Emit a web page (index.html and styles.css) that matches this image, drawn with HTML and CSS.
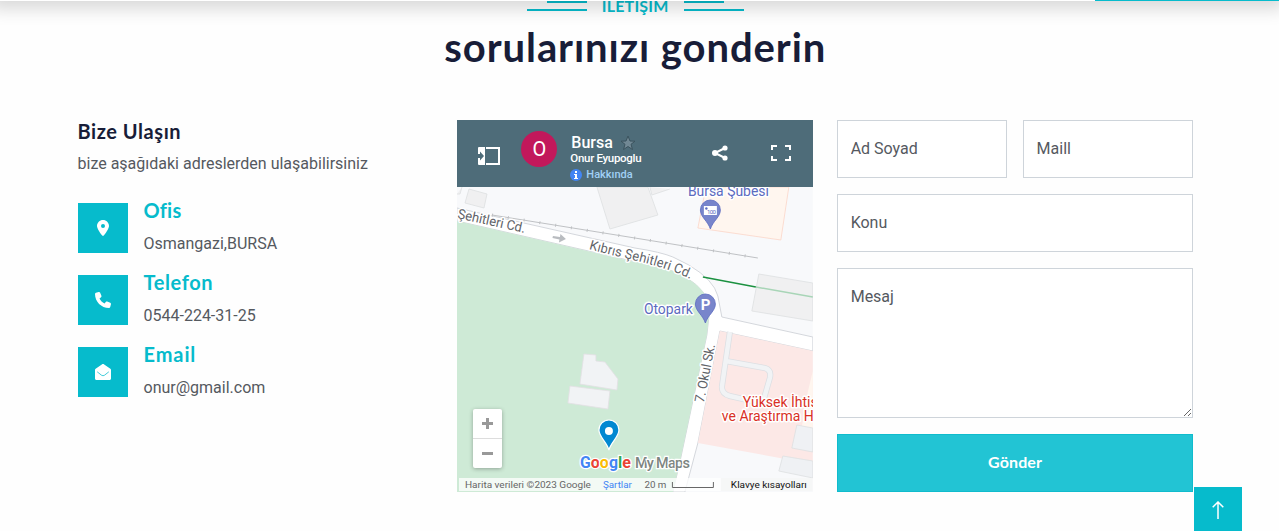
FILE: index.html
```html
<!DOCTYPE html>
<html lang="tr">
<head>
<meta charset="utf-8">
<title>İletişim</title>
<link rel="stylesheet" href="styles.css">
</head>
<body>
<header class="navbar"><span class="navbar-action"></span></header>
<main class="contact">
  <div class="heading">
    <div class="eyebrow"><span class="rules left"></span><span class="eyebrow-text">İLETİŞİM</span><span class="rules right"></span></div>
    <h1 class="title">sorularınızı gonderin</h1>
  </div>
  <div class="columns">
    <section class="info">
      <h2 class="info-title">Bize Ulaşın</h2>
      <p class="info-text">bize aşağıdaki adreslerden ulaşabilirsiniz</p>
      <div class="item">
        <span class="item-icon"><svg width="12" height="16" viewBox="0 0 384 512"><path d="M215.700 499.200C267 435 384 279.400 384 192 384 86 298 0 192 0S0 86 0 192c0 87.400 117 243 168.300 307.200 12.300 15.300 35.100 15.300 47.400 0zM192 128a64 64 0 1 1 0 128 64 64 0 1 1 0-128z"/></svg></span>
        <div><h3 class="item-title ofis">Ofis</h3><p class="item-text">Osmangazi,BURSA</p></div>
      </div>
      <div class="item">
        <span class="item-icon"><svg width="16" height="16" viewBox="0 0 512 512"><path d="M164.900 24.600c-7.700-18.600-28-28.500-47.400-23.200l-88 24C12.100 30.200 0 46 0 64c0 247.400 200.600 448 448 448 18 0 33.800-12.100 38.600-29.500l24-88c5.300-19.400-4.600-39.700-23.200-47.400l-96-40c-16.300-6.800-35.200-2.100-46.300 11.600L304.700 368C234.300 334.700 177.300 277.700 144 207.300L193.300 167c13.700-11.200 18.400-30 11.600-46.300l-40-96z"/></svg></span>
        <div><h3 class="item-title">Telefon</h3><p class="item-text">0544-224-31-25</p></div>
      </div>
      <div class="item">
        <span class="item-icon"><svg width="16" height="16" viewBox="0 0 512 512"><path d="M0 190C0 174 7 160 20 151L218 12C241-4 271-4 294 12L492 151C505 160 512 174 512 190V464C512 491 491 512 464 512H48C21 512 0 491 0 464Z"/><path class="flap" d="M70 250L210 360Q256 392 302 360L442 250"/></svg></span>
        <div><h3 class="item-title email">Email</h3><p class="item-text">onur@gmail.com</p></div>
      </div>
    </section>
    <section class="map">
      <svg class="map-canvas" viewBox="457 120 356 372" preserveAspectRatio="none">
        <rect class="land" x="457" y="120" width="356" height="372"/>
        <path class="building" d="M597 187L610 229L658 215L648 187ZM469 189L487 194L484 208L465 203ZM457 194L460 194L462 187M650 187L652 195L670 189M759 274L813 283V321L752 311Z"/>
        <path class="shop" d="M706 187L698 228L781 240L789 187Z"/>
        <path class="road" d="M457 208L635 248Q661 252 673 257L689 265Q714 280 718 296L722 317L813 337V351L720 331L698 443L685 492H673L680 462L707 335L710 308Q707 290 687 278Q676 271 663 268L457 221Z"/>
        <path class="park" d="M457 221L635 262Q676 269 687 278Q708 291 710 308L707 335L680 462L673 492H457Z"/>
        <path class="hospital" d="M720 331L813 351V465L780 458L698 443Z"/>
        <path class="shop plain" d="M813 371L808 392L802 427L813 429Z"/>
        <path class="service-edge" d="M730 332L722 387Q722 394 730 396L752 401M726 361L765 368Q772 370 770 378L764 399"/>
        <path class="service" d="M730 332L722 387Q722 394 730 396L752 401M726 361L765 368Q772 370 770 378L764 399"/>
        <path class="building cool" d="M797 425L813 428V452L792 448ZM783 456L813 461V478L779 471Z"/>
        <path class="building house" d="M584 354L596 355V361L605 362L618 379L617 390L580 384ZM570 386L610 391L608 409L568 403Z"/>
        <path class="rail" d="M492 215L635 238L758 258"/><path class="rail ticks" d="M492 215L635 238L758 258"/>
        <path class="path-green" d="M703 277L756 287"/><path class="path-green pale" d="M756 287L813 297"/>
        <path class="oneway" d="M553 236L560 237L560.500 234L566 239L559 242.500L559.500 239.500L552.500 238Z"/>
        <path id="kibris" class="guide" d="M589 249C618 258 665 264 696 282"/>
        <text class="street" x="457" y="218" transform="rotate(12.500 457 218)" textLength="69" lengthAdjust="spacingAndGlyphs">Şehitleri Cd.</text>
        <text class="street"><textPath href="#kibris" textLength="106" lengthAdjust="spacingAndGlyphs">Kıbrıs Şehitleri Cd.</textPath></text>
        <text class="street" x="704" y="403" transform="rotate(-79 704 403)" textLength="59" lengthAdjust="spacingAndGlyphs">7. Okul Sk.</text>
        <text class="place" x="688" y="196" textLength="81" lengthAdjust="spacingAndGlyphs">Bursa Şubesi</text>
        <text class="place" x="644" y="314" textLength="49" lengthAdjust="spacingAndGlyphs">Otopark</text>
        <g class="pin"><path d="M710.500 229C708 221 700.500 217 700.500 210a10 10 0 0 1 20 0C720.500 217 713 221 710.500 229Z"/><path d="M705.500 323C703 315 695.500 311 695.500 304a10 10 0 0 1 20 0C715.500 311 708 315 705.500 323Z"/></g>
        <rect class="ticket" x="704" y="206" width="13" height="9"/><circle class="ticket-dot" cx="706.500" cy="208.500" r="1.200"/><text class="ticket-text" x="707" y="214" textLength="9">100</text>
        <text class="parking" x="705.700" y="310" text-anchor="middle">P</text>
        <text class="medical" x="743" y="407">Yüksek İhtis</text>
        <text class="medical" x="722" y="421" textLength="92" lengthAdjust="spacingAndGlyphs">ve Araştırma H</text>
        <path class="marker" d="M609 450C607 442 599 437 599 430a10 10 0 0 1 20 0C619 437 611 442 609 450Z"/><circle class="marker-hole" cx="609" cy="431" r="4"/>
        <text class="google" x="580" y="468" textLength="51" lengthAdjust="spacingAndGlyphs"><tspan class="g-blue">G</tspan><tspan class="g-red">o</tspan><tspan class="g-yellow">o</tspan><tspan class="g-blue">g</tspan><tspan class="g-green">l</tspan><tspan class="g-red">e</tspan></text>
        <text class="mymaps" x="635" y="468" textLength="55">My Maps</text>
        <rect class="credit" x="459" y="478" width="262" height="13"/><rect class="credit keys" x="721" y="478" width="92" height="13"/>
        <text class="legal" x="465" y="488" textLength="126" lengthAdjust="spacingAndGlyphs">Harita verileri ©2023 Google</text>
        <text class="legal link" x="603" y="488" textLength="29" lengthAdjust="spacingAndGlyphs">Şartlar</text>
        <text class="legal" x="644.500" y="488" textLength="22" lengthAdjust="spacingAndGlyphs">20 m</text>
        <path class="scale" d="M672.500 482V487.500H713.500V482"/>
        <text class="legal dark" x="731" y="488" textLength="76" lengthAdjust="spacingAndGlyphs">Klavye kısayolları</text>
      </svg>
      <div class="map-bar">
        <svg class="bar-icon panel" width="22" height="18" viewBox="0 0 22 18"><path class="fill" d="M1 0H7V18H1Q0 18 0 17V11H2V13.500L6 9L2 4.500V7H0V1Q0 0 1 0Z"/><path class="line" d="M8 1H21V17H8"/></svg>
        <span class="avatar">O</span>
        <div class="map-meta">
          <div class="map-name">Bursa <svg width="16" height="16" viewBox="0 0 16 16"><path class="star" d="M8 1L10 6L15 6.200L11 9.300L12.500 14.500L8 11.500L3.500 14.500L5 9.300L1 6.200L6 6Z"/></svg></div>
          <div class="map-owner">Onur Eyupoglu</div>
          <div class="map-about"><svg width="12" height="12" viewBox="0 0 12 12"><circle cx="6" cy="6" r="6"/><path d="M5 2H7V4H5ZM4 5H7V9H8V10H4V9H5V6H4Z"/></svg>Hakkında</div>
        </div>
        <svg class="bar-icon share" width="16" height="16" viewBox="0 0 16 16"><path class="line thin" d="M13 3L3 8L13 13"/><circle cx="13" cy="3" r="2.600"/><circle cx="3" cy="8" r="3"/><circle cx="13" cy="13" r="2.600"/></svg>
        <svg class="bar-icon full" width="20" height="16" viewBox="0 0 20 16"><path class="line" d="M1 5V1H6M14 1H19V5M19 11V15H14M6 15H1V11"/></svg>
      </div>
      <div class="zoom"><span class="zoom-in"></span><span class="zoom-out"></span></div>
    </section>
    <form class="form">
      <input class="field" aria-label="Ad Soyad" placeholder="Ad Soyad">
      <input class="field" aria-label="Mail" placeholder="Maill">
      <input class="field wide" aria-label="Konu" placeholder="Konu">
      <textarea class="field wide message" aria-label="Mesaj" placeholder="Mesaj"></textarea>
      <button class="send wide" type="button">Gönder</button>
    </form>
  </div>
</main>
<a class="to-top" aria-label="Yukarı"><svg width="12" height="18" viewBox="0 0 12 18"><path d="M6 18V1M.7 6.300L6 1L11.300 6.300"/></svg></a>
</body>
</html>
```
FILE: styles.css
```css
* { box-sizing: border-box; }
html, body { height: 100%; overflow: hidden; }
body { margin: 0; background: #fefefe; color: #55595f; font: 16px/24px Roboto, sans-serif; }
h1, h2, h3, p { margin: 0; }
.navbar { position: fixed; z-index: 5; top: -74px; left: -10px; right: -5px; height: 75px; background: #fff; box-shadow: 0 8px 16px rgba(0,0,0,.15); display: flex; justify-content: flex-end; }
.navbar-action { width: 189px; background: #06bbcc; }
.contact { padding: 0 86px 0 77.5px; }
.heading { height: 120px; }
.eyebrow { display: flex; justify-content: center; gap: 15px; height: 12px; }
.eyebrow-text { width: 67px; font: 700 16px/12px Lato, sans-serif; color: #06bbcc; white-space: nowrap; letter-spacing: .2px; }
.rules { width: 60px; height: 11px; border-bottom: 2px solid #06bbcc; background: linear-gradient(#06bbcc, #06bbcc) no-repeat; background-size: 40px 2px; }
.rules.left { background-position: 20px 1px; }
.rules.right { background-position: 0 1px; }
.title { font: 700 40px/48px Lato, sans-serif; color: #181d38; text-align: center; margin-top: 11px; letter-spacing: .93px; }
.columns { display: grid; grid-template-columns: repeat(3, minmax(0, 1fr)); gap: 24px; }
.info-title { font: 700 20px/24px Lato, sans-serif; color: #181d38; margin-top: -1px; letter-spacing: .55px; }
.info-text { margin: 9px 0 27px; }
.item { display: flex; gap: 16px; height: 50px; margin-bottom: 22px; }
.item-icon { width: 50px; height: 50px; background: #06bbcc; display: flex; align-items: center; justify-content: center; }
.item-icon svg { fill: #fff; }
.flap { fill: none; stroke: #06bbcc; stroke-width: 24; }
.item-title { font: 700 20px/24px Lato, sans-serif; color: #06bbcc; margin: -5px 0 10px; letter-spacing: .6px; }
.item-title.ofis { letter-spacing: .2px; }
.item-title.email { letter-spacing: .9px; }
.map { position: relative; height: 372px; overflow: hidden; }
.map-canvas { display: block; width: 100%; height: 372px; }
.map-canvas text { font-family: Roboto, sans-serif; }
.land { fill: #f8f9fb; }
.building { fill: #f0f0f1; stroke: #dddfe1; stroke-width: .8; }
.building.cool { fill: #eff1f4; }
.building.house { fill: #f1f3f5; stroke: #e3dfe4; }
.shop { fill: #fff6ef; stroke: #fbd5c8; stroke-width: .8; }
.shop.plain { stroke: none; }
.road { fill: #fff; stroke: #d4d7dc; stroke-width: 1; }
.park { fill: #ceead6; }
.hospital { fill: #fce8e6; }
.service-edge { fill: none; stroke: #dcdfe3; stroke-width: 6; }
.service { fill: none; stroke: #f1f3f5; stroke-width: 4.500; }
.rail { fill: none; stroke: #bfc1c4; stroke-width: 1; }
.rail.ticks { stroke-width: 3; stroke-dasharray: 1 15; }
.path-green { stroke: #1b9140; stroke-width: 1.500; }
.path-green.pale { stroke: #a8d5b7; }
.oneway { fill: #b9bcc0; }
.guide { fill: none; }
.street, .place, .medical { paint-order: stroke; stroke: #fff; stroke-width: 3px; stroke-linejoin: round; }
.street { font-size: 13.500px; fill: #5f6368; }
.place { font-size: 14.500px; fill: #5c6bc0; }
.medical { font-size: 14px; fill: #d93025; }
.pin { fill: #7885cb; stroke: #5c6bc0; stroke-width: .8; }
.ticket { fill: #fff; }
.ticket-dot, .ticket-text { fill: #5c6bc0; }
.ticket-text { font-size: 6px; }
.parking { font-size: 15px; font-weight: 700; fill: #fff; }
.marker { fill: #0288d1; stroke: #fff; stroke-width: 1.200; }
.marker-hole { fill: #fff; }
.google, .mymaps { font-size: 16px; font-weight: 700; paint-order: stroke; stroke: #fff; stroke-width: 2.500px; }
.mymaps { font-size: 14.500px; font-weight: 500; fill: #7d8581; }
.g-blue { fill: #4285f4; }
.g-red { fill: #ea4335; }
.g-yellow { fill: #fbbc04; }
.g-green { fill: #34a853; }
.credit { fill: #fff; fill-opacity: .75; }
.credit.keys { fill: #f5f5f5; }
.legal { font-size: 9.500px; fill: #666; }
.legal.link { fill: #4285f4; }
.legal.dark { fill: #111; }
.scale { fill: none; stroke: #666; }
.map-bar { position: absolute; inset: 0 0 auto; height: 67px; background: #4e6c79; display: flex; color: #fff; }
.bar-icon { fill: #fff; flex: none; }
.bar-icon .line { fill: none; stroke: #fff; stroke-width: 2; }
.panel { margin: 27px 21px 0 21px; }
.avatar { width: 36px; height: 36px; margin-top: 11px; border-radius: 50%; background: #c2185b; font-size: 20px; line-height: 36px; text-align: center; flex: none; }
.map-meta { width: 155px; flex: none; padding: 13px 0 0 13px; }
.map-name { display: flex; align-items: center; gap: 7px; height: 19px; padding-left: 1px; font-weight: 500; font-size: 16px; }
.star { fill: #718894; stroke: #3b535e; }
.map-owner { font-size: 11.500px; line-height: 12px; font-weight: 500; letter-spacing: -.3px; }
.map-about { display: flex; gap: 4px; align-items: center; color: #a1d0f5; font-size: 11px; line-height: 14px; margin-top: 4px; font-weight: 500; }
.map-about circle { fill: #4285f4; }
.map-about path { fill: #fff; }
.share { margin: 25px 0 0; }
.full { margin: 25px 0 0 43px; }
.zoom { position: absolute; left: 16px; top: 289px; width: 29px; height: 59px; background: #fff; border-radius: 2px; box-shadow: 0 1px 4px rgba(0,0,0,.3); display: grid; grid-template-rows: 29px 30px; }
.zoom span { background: linear-gradient(#999, #999) center / 11px 3px no-repeat; }
.zoom .zoom-in { background: linear-gradient(#999, #999) center / 11px 3px no-repeat, linear-gradient(#999, #999) center / 3px 11px no-repeat; }
.zoom .zoom-out { border-top: 1px solid #ddd; }
.form { display: grid; grid-template-columns: minmax(0, 1fr) minmax(0, 1fr); grid-template-rows: 58px 58px 150px 58px; gap: 16px; height: 372px; }
.wide { grid-column: 1 / -1; }
.field { width: 100%; height: 100%; border: 1px solid #ced4da; border-radius: 0; background: #fff; padding: 15px 12.500px 17px; font: 16px/24px Roboto, sans-serif; outline: none; }
.field::placeholder { color: #55595f; opacity: 1; }
.message { padding-top: 16px; resize: vertical; }
.send { background: #22c4d4; border: 1px solid #10bccd; color: #fff; font: 700 16px/24px Lato, sans-serif; letter-spacing: .1px; padding-bottom: 3px; }
.to-top { position: fixed; z-index: 6; left: 1194px; top: 487px; width: 48px; height: 44px; background: #06bbcc; padding: 14px 18px; }
.to-top svg { display: block; fill: none; stroke: #fff; stroke-width: 1.500; }
```
